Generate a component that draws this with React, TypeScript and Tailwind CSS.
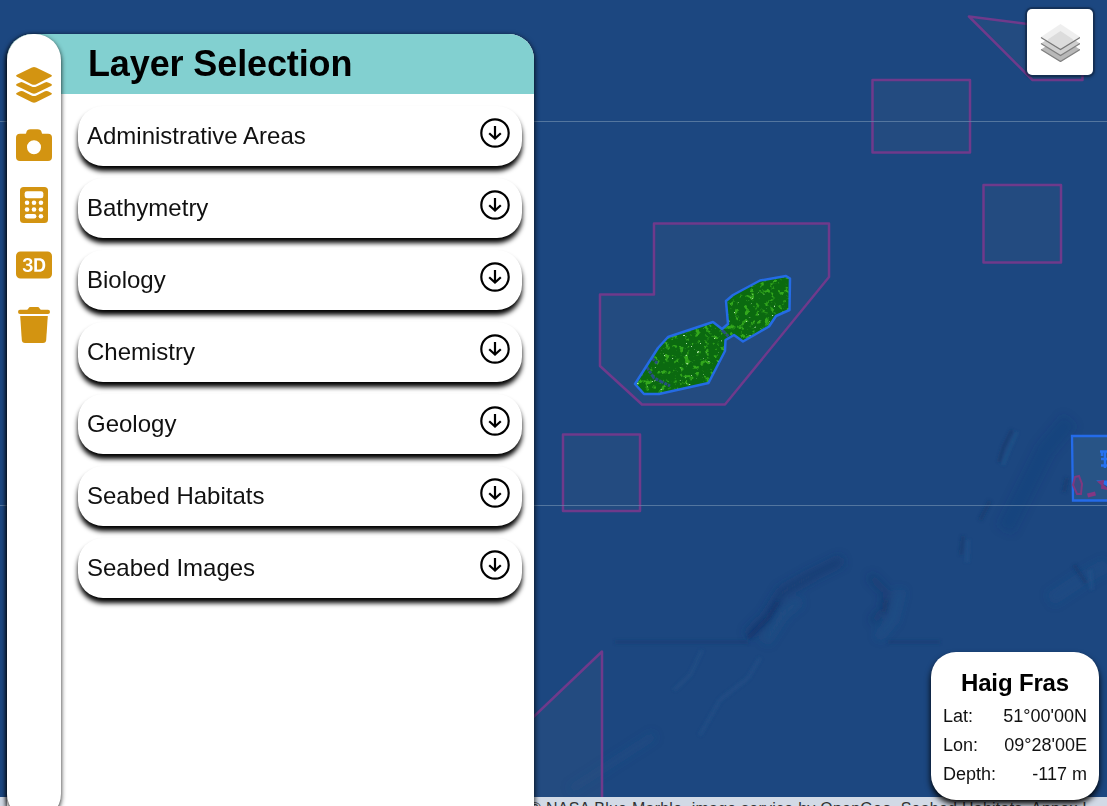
import { BsBadge3dFill } from "react-icons/bs";

const categories = [
  "Administrative Areas",
  "Bathymetry",
  "Biology",
  "Chemistry",
  "Geology",
  "Seabed Habitats",
  "Seabed Images",
];

const readings = [
  ["Lat:", "51°00'00N"],
  ["Lon:", "09°28'00E"],
  ["Depth:", "-117 m"],
];

const reef =
  "M726 301L733 295L760 280.500L786 276L790 278.500L789.500 310L776 316L769 326.500L743 341.500L734 335L725.500 340L725 351L708.500 383L659 394L644 394L635 384L658 348L668 337L713 322L722 329L728 324Z";

function SeaMap() {
  return (
    <svg className="absolute inset-0" width="1107" height="806" viewBox="0 0 1107 806" fill="none">
      <defs>
        <filter id="soft" x="-50%" y="-50%" width="200%" height="200%">
          <feGaussianBlur stdDeviation="4" />
        </filter>
        <filter id="fine" x="-50%" y="-50%" width="200%" height="200%">
          <feGaussianBlur stdDeviation="1.800" />
        </filter>
        <filter id="speckle" x="0" y="0" width="100%" height="100%" colorInterpolationFilters="sRGB">
          <feTurbulence type="fractalNoise" baseFrequency="0.2" numOctaves="3" seed="8" />
          <feColorMatrix values="0 0 0 0 0.2  0 0 0 0 0.66  0 0 0 0 0.11  7 0 0 0 -4" />
        </filter>
        <filter id="glint" x="0" y="0" width="100%" height="100%" colorInterpolationFilters="sRGB">
          <feTurbulence type="fractalNoise" baseFrequency="0.35" numOctaves="2" seed="21" />
          <feColorMatrix values="0 0 0 0 0.7  0 0 0 0 0.88  0 0 0 0 0.68  0 12 0 0 -9" />
        </filter>
        <clipPath id="reefClip">
          <path d={reef} />
        </clipPath>
      </defs>
      <rect width="1107" height="806" fill="#1c4780" />
      <g filter="url(#soft)">
        <path d="M748 635L766 618L782 592L812 575L842 560" stroke="#183b70" strokeWidth="9" opacity="0.75" />
        <path d="M765 642L783 614L800 600" stroke="#215488" strokeWidth="9" opacity="0.5" />
        <path d="M870 576L886 592L884 610L872 622" stroke="#163768" strokeWidth="7" opacity="0.45" />
        <path d="M901 590L893 620L878 638" stroke="#235a8d" strokeWidth="8" opacity="0.4" />
        <path d="M1070 420L1045 450L1025 490L1005 530" stroke="#193d75" strokeWidth="18" opacity="0.2" />
        <path d="M1107 565L1080 580L1050 600" stroke="#20538a" strokeWidth="14" opacity="0.25" />
        <path d="M655 735L570 790" stroke="#23538a" strokeWidth="9" opacity="0.2" />
      </g>
      <g filter="url(#fine)">
        <path d="M615 642H748M888 642H940" stroke="#173b70" strokeWidth="3" opacity="0.6" />
        <path d="M748 638L768 618L778 602" stroke="#15346a" strokeWidth="4" opacity="0.6" />
        <path d="M1012 430L1003 448L999 462" stroke="#173868" strokeWidth="3" opacity="0.7" />
        <path d="M1017 432L1009 450L1003 465" stroke="#265c90" strokeWidth="3" opacity="0.5" />
        <path d="M886 600L884 612M963 536L961 555M1074 565L1086 583M1067 478L1064 492M990 501L980 520" stroke="#163767" strokeWidth="4" opacity="0.5" />
        <path d="M968 540L967 562M1090 570L1092 590" stroke="#245a8e" strokeWidth="4" opacity="0.4" />
        <path d="M760 658L748 678L720 700L700 735" stroke="#24558a" strokeWidth="4" opacity="0.4" />
        <path d="M702 650L690 675L674 690" stroke="#24558a" strokeWidth="4" opacity="0.35" />
      </g>
      <g stroke="#6f3a8b" strokeWidth="2.500" fill="#808080" fillOpacity="0.07" strokeLinejoin="round">
        <path d="M654 223.500H829V277L725 404.500H642L600 366V294.500H654Z" />
        <path d="M872.500 80H970V152.500H872.500Z" />
        <path d="M983.500 185H1061V262.500H983.500Z" />
        <path d="M563 434.500H640V511H563Z" />
        <path d="M969 16.500L1082.500 31V80H1032.500Z" />
        <path d="M602 651.500V830H500V749Z" />
      </g>
      <path d="M0 121.500H1107M0 505.500H1107" stroke="#6685aa" strokeWidth="1" opacity="0.75" />
      <path d={reef} fill="#0b6a10" />
      <g clipPath="url(#reefClip)">
        <rect x="630" y="270" width="165" height="130" filter="url(#speckle)" />
        <rect x="630" y="270" width="165" height="130" filter="url(#glint)" />
        <path d="M646 366L654 378L670 386M651 357L658 364M722 330L729 337" stroke="#285080" strokeWidth="3" strokeDasharray="5 1 3 1" />
      </g>
      <path d={reef} stroke="#246be5" strokeWidth="2.500" strokeLinejoin="round" />
      <path d="M1072 436H1112V500.500H1073Z" fill="#4a7d99" fillOpacity="0.25" stroke="#246be9" strokeWidth="2.300" />
      <path d="M1100 451.500H1107M1101 459H1107M1101 465.500H1107M1102 451V456M1105 451V468" stroke="#2772f0" strokeWidth="2.500" />
      <path d="M1096 480.500H1107V486Z" fill="#2772f0" />
      <path d="M1075 477L1079 476L1082 484L1081 494L1077 494L1073 485ZM1099 482L1107 489L1102 488L1103 481Z" stroke="#7f387f" strokeWidth="2" fill="#843783" fillOpacity="0.2" />
      <path d="M1087.500 495.500L1095.500 493.500" stroke="#843783" strokeWidth="4" />
    </svg>
  );
}

function LayersIcon() {
  return (
    <svg width="36" height="36" viewBox="0 0 36 36" fill="currentColor">
      <path d="M18 0Q18.800 0 20 .5L35 7.700Q36.800 8.700 35 9.800L20 17.400Q18 18.300 16 17.400L1 9.800Q-.8 8.700 1 7.700L16 .5Q17.200 0 18 0Z" />
      <path d="M1 16.800L4 15.400Q5.500 14.700 7 15.400L15.500 19.500Q18 20.700 20.500 19.500L29 15.400Q30.500 14.700 32 15.400L35 16.800Q36.800 17.900 35 18.900L20 26.300Q18 27.200 16 26.300L1 18.900Q-.8 17.900 1 16.800Z" />
      <path d="M1 25.700L4 24.300Q5.500 23.600 7 24.300L15.500 28.400Q18 29.600 20.500 28.400L29 24.300Q30.500 23.600 32 24.300L35 25.700Q36.800 26.800 35 27.800L20 35.300Q18 36.200 16 35.300L1 27.800Q-.8 26.800 1 25.700Z" />
    </svg>
  );
}

function CameraIcon() {
  return (
    <svg width="36" height="36" viewBox="0 0 36 36" fill="currentColor">
      <path
        fillRule="evenodd"
        d="M4 6.700H9.500Q10.200 6.700 10.300 5.500Q11 2.200 14.500 2.200H21.500Q25 2.200 25.700 5.500Q25.800 6.700 26.500 6.700H32Q36 6.700 36 10.700V30Q36 34 32 34H4Q0 34 0 30V10.700Q0 6.700 4 6.700ZM18 13.300A7 7 0 1 0 18 27.300A7 7 0 1 0 18 13.300Z"
      />
    </svg>
  );
}

function CalculatorIcon() {
  return (
    <svg width="28" height="36" viewBox="0 0 27 36" preserveAspectRatio="none" fill="currentColor">
      <rect width="27" height="36" rx="3.500" />
      <g fill="#fff">
        <rect x="4.500" y="4.300" width="18" height="7" rx="2.200" />
        <rect x="4.600" y="27" width="11.200" height="4.400" rx="2.200" />
        <circle cx="6.800" cy="15.800" r="2.200" />
        <circle cx="13.500" cy="15.800" r="2.200" />
        <circle cx="20.200" cy="15.800" r="2.200" />
        <circle cx="6.800" cy="22.500" r="2.200" />
        <circle cx="13.500" cy="22.500" r="2.200" />
        <circle cx="20.200" cy="22.500" r="2.200" />
        <circle cx="20.200" cy="29.200" r="2.200" />
      </g>
    </svg>
  );
}

function TrashIcon() {
  return (
    <svg width="32" height="36" viewBox="0 0 32 36" fill="currentColor">
      <path d="M2 2.800H9Q10 2.500 10.500 1.300Q11 0 12.500 0H19.500Q21 0 21.500 1.300Q22 2.500 23 2.800H30Q32 2.900 32 4.900Q32 6.900 30 7H2Q0 6.900 0 4.900Q0 2.900 2 2.800Z" />
      <path d="M2.200 9H29.800L28.200 33Q28 36 25 36H7Q4 36 3.800 33Z" />
    </svg>
  );
}

function ArrowIcon() {
  return (
    <svg className="mb-1.5" width="30" height="30" viewBox="0 0 30 30" fill="none" stroke="#000" strokeWidth="2.200">
      <circle cx="15" cy="15" r="13.700" />
      <path d="M15 8V20.500M9.200 15.200L15 20.600L20.800 15.200" />
    </svg>
  );
}

function StackIcon() {
  return (
    <svg width="40" height="40" viewBox="0 0 40 40">
      <path d="M1 27.500L20.500 15L40 27.500L20.500 39.500Z" fill="#b8b8b8" />
      <path d="M1 27.500L20.500 39.500L40 27.500" fill="none" stroke="#808080" strokeWidth="1.300" />
      <path d="M1 21.500L20.500 9L40 21.500L20.500 33.500Z" fill="#cfcfcf" />
      <path d="M1 21.500L20.500 33.500L40 21.500" fill="none" stroke="#808080" strokeWidth="1.300" />
      <path d="M1 15L20.500 2L40 15L20.500 27.500Z" fill="#efefef" />
      <path d="M8.500 17L20.500 9L32.500 17L33.500 19L20.500 27L7.500 19Z" fill="#dcdcdc" />
      <path d="M1 15.500L20.500 27.500L40 15.500" fill="none" stroke="#777" strokeWidth="1.300" />
    </svg>
  );
}

export default function App() {
  return (
    <div className="relative h-[806px] w-[1107px] overflow-hidden bg-[#1c4780] font-['Liberation_Sans',Arial,sans-serif] text-black">
      <SeaMap />

      <footer className="absolute inset-x-0 top-[797px] h-6 bg-[#d2dae6] pr-5 text-right text-[16px] leading-6 tracking-[0.24px] whitespace-nowrap text-[#333]">
        © NASA Blue Marble, image service by OpenGeo, Seabed Habitats, Annex I
      </footer>

      <section className="absolute top-[34px] left-[7px] h-[800px] w-[527px] rounded-t-[25px] bg-white shadow-[0_2px_5px_1px_rgba(0,0,0,0.75)]">
        <h1 className="h-[60px] rounded-t-[25px] bg-[#82d0d0] pl-[81px] text-[36px] leading-[59px] font-bold tracking-[-0.12px]">
          Layer Selection
        </h1>
        <ul className="flex flex-col gap-3 py-3 pr-3 pl-[71px]">
          {categories.map((name) => (
            <li
              key={name}
              className="flex h-[60px] items-center justify-between rounded-[25px] bg-white pr-3 pl-[9px] text-2xl text-[#111] shadow-[0_5px_5px_#000]"
            >
              {name}
              <ArrowIcon />
            </li>
          ))}
        </ul>
      </section>

      <nav className="absolute top-[34px] left-[7px] flex h-[786px] w-[54px] flex-col items-center gap-6 rounded-[26px] bg-white pt-[33px] text-4xl text-[#d39411] shadow-[0_2px_5px_rgba(0,0,0,0.9)]">
        <LayersIcon />
        <CameraIcon />
        <CalculatorIcon />
        <BsBadge3dFill />
        <TrashIcon />
      </nav>

      <button className="absolute top-[9px] left-[1027px] flex size-[66px] items-center justify-center rounded-[5px] bg-white shadow-[0_0_0_2px_rgba(15,35,65,0.45),0_1px_3px_2px_rgba(0,0,0,0.25)]">
        <StackIcon />
      </button>

      <aside className="absolute top-[652px] left-[931px] h-[148px] w-[168px] rounded-[25px] bg-white px-3 pt-[14px] shadow-[0_4px_6px_#000]">
        <h2 className="mb-[3px] text-center text-2xl leading-[33px] font-bold tracking-[-0.15px]">Haig Fras</h2>
        {readings.map(([label, value]) => (
          <p key={label} className="flex h-[29px] items-center justify-between text-[18px] text-[#111]">
            <span>{label}</span>
            <span>{value}</span>
          </p>
        ))}
      </aside>
    </div>
  );
}
